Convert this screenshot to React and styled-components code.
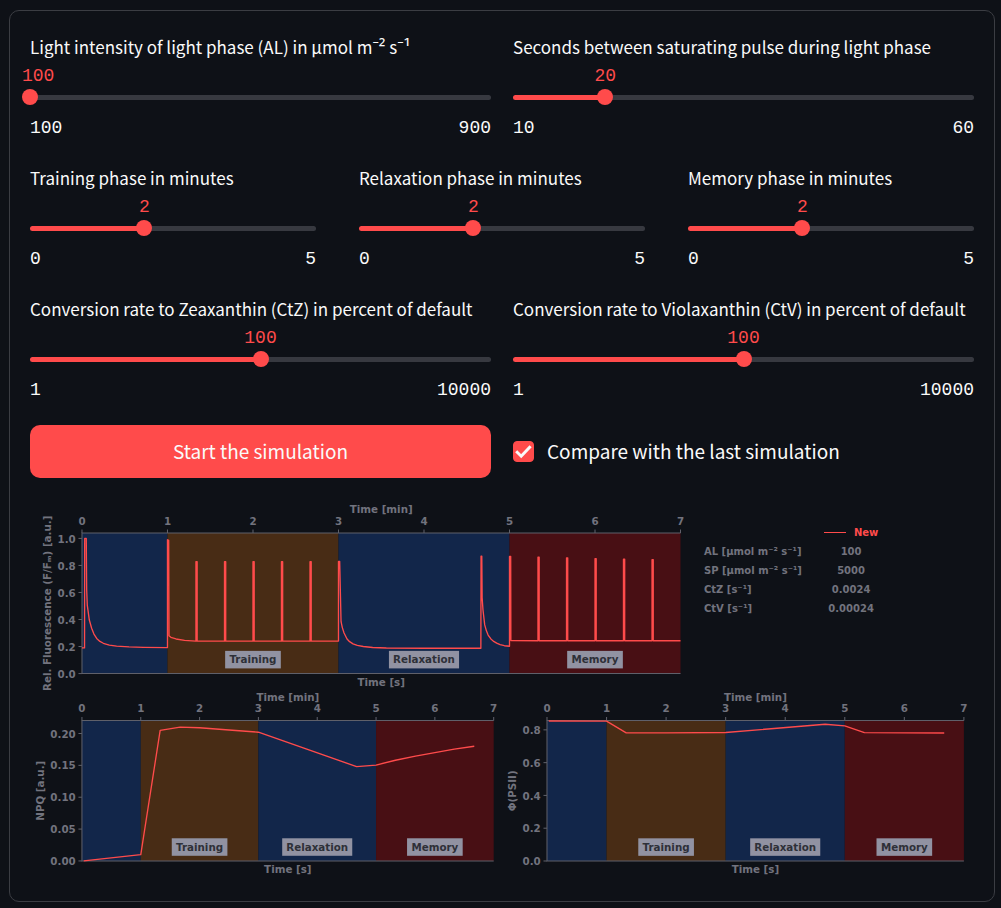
import React, { useState } from "react";
import styled, { createGlobalStyle } from "styled-components";

const color = {
  page: "#0e1117",
  text: "#fafafa",
  accent: "#ff4b4b",
  rail: "#373940",
  border: "#3b3d43",
  chartText: "#72737e",
  spine: "#5f606a",
  tag: "#9192a2",
  tagText: "#2e3038",
  dark: "#12264a",
  training: "#482c15",
  memory: "#480f14",
};

const THUMB = 16;

const GlobalStyle = createGlobalStyle`
  *, *::before, *::after { box-sizing: border-box; }
  body {
    margin: 0;
    background: ${color.page};
    color: ${color.text};
    font-family: "Noto Sans CJK SC", "Noto Sans", sans-serif;
  }
`;

const Card = styled.main`
  margin: 10px 6px 6px 9px;
  padding: 22px 20px 21px;
  border: 1px solid ${color.border};
  border-radius: 10px;
`;

const Controls = styled.form`
  display: flex;
  flex-direction: column;
  gap: 21px;
`;

const Fields = styled.div`
  display: flex;
  flex-direction: column;
  gap: 22px;
`;

const FieldRow = styled.div`
  display: grid;
  grid-template-columns: repeat(${(p) => p.$columns}, minmax(0, 1fr));
  column-gap: ${(p) => (p.$columns === 3 ? 43 : 22)}px;
  align-items: center;
`;

const Field = styled.div`
  display: flex;
  flex-direction: column;
`;

const FieldLabel = styled.label`
  font-size: 17px;
  line-height: 28px;
  white-space: nowrap;
`;

const Exponent = styled.span`
  font-family: "Noto Sans", sans-serif;
  font-size: 19px;
  line-height: 0;
`;

const ValueRow = styled.div`
  display: flex;
  margin: 0 -${THUMB / 2}px;
  font: 18px/30px "Liberation Mono", monospace;
  color: ${color.accent};
`;

const Value = styled.output`
  margin-left: max(
    0px,
    calc((100% - ${THUMB}px) * var(--fill) + ${THUMB / 2}px - var(--chars) * 0.5ch)
  );
`;

const RailArea = styled.div`
  display: flex;
  align-items: center;
  height: 12px;
`;

const Rail = styled.div`
  flex: 1;
  display: flex;
  align-items: center;
  height: 5px;
  border-radius: 3px;
  background: linear-gradient(
    to right,
    ${color.accent} calc(100% * var(--fill)),
    ${color.rail} calc(100% * var(--fill))
  );
`;

const Range = styled.input.attrs({ type: "range" })`
  appearance: none;
  flex: none;
  width: calc(100% + ${THUMB}px);
  height: ${THUMB}px;
  margin: 0 -${THUMB / 2}px;
  background: transparent;
  cursor: pointer;

  &::-webkit-slider-thumb {
    appearance: none;
    width: ${THUMB}px;
    height: ${THUMB}px;
    border: 0;
    border-radius: 50%;
    background: ${color.accent};
  }
`;

const Limits = styled.div`
  display: flex;
  justify-content: space-between;
  margin-top: 11px;
  font: 18px/28px "Liberation Mono", monospace;
`;

const StartButton = styled.button`
  height: 53px;
  padding: 0 16px 2px;
  border: 0;
  border-radius: 10px;
  background: ${color.accent};
  color: ${color.text};
  font-family: inherit;
  font-size: 19px;
  line-height: 28px;
  cursor: pointer;
`;

const CheckLabel = styled.label`
  display: flex;
  align-items: center;
  gap: 13px;
  font-size: 19px;
  line-height: 28px;
  cursor: pointer;
`;

const CheckText = styled.span`
  padding-bottom: 2px;
`;

const CheckBox = styled.span`
  display: grid;
  width: 21px;
  height: 21px;

  & > * {
    grid-area: 1 / 1;
  }
`;

const CheckInput = styled.input.attrs({ type: "checkbox" })`
  appearance: none;
  margin: 0;
  border: 1px solid ${color.rail};
  border-radius: 4px;

  &:checked {
    border-color: ${color.accent};
    background: ${color.accent};
  }

  &:not(:checked) + svg {
    visibility: hidden;
  }
`;

const Tick = styled.svg`
  width: 21px;
  height: 21px;
  pointer-events: none;
`;

const Figure = styled.section`
  margin-top: 12px;
  font-family: "DejaVu Sans", sans-serif;
  font-weight: bold;
  color: ${color.chartText};
`;

const FigureRow = styled.div`
  display: grid;
  grid-template-columns: ${(p) => p.$columns};
`;

const ChartSvg = styled.svg`
  display: block;
  width: 100%;
  height: auto;
  overflow: visible;
  font-size: 10px;
  fill: ${color.chartText};
`;

const Legend = styled.table`
  justify-self: start;
  align-self: start;
  margin: 33px 0 0 14px;
  border-collapse: collapse;
  font-size: 10px;
  line-height: 19px;

  th,
  td {
    height: 19px;
    padding: 0;
    white-space: nowrap;
  }
  th {
    text-align: left;
  }
  td {
    text-align: center;
  }
  tbody th {
    padding-right: 22px;
  }
`;

const SeriesName = styled.span`
  display: flex;
  align-items: center;
  gap: 8px;
  color: ${color.accent};

  &::before {
    content: "";
    width: 22px;
    height: 1px;
    background: ${color.accent};
  }
`;

function SliderField({ id, label, min, max, initial, log }) {
  const low = log ? Math.log10(min) : min;
  const high = log ? Math.log10(max) : max;
  const [position, setPosition] = useState(log ? Math.log10(initial) : initial);
  const shown = String(log ? Math.round(10 ** position) : position);
  const vars = {
    "--fill": (position - low) / (high - low),
    "--chars": shown.length,
  };
  return (
    <Field style={vars}>
      <FieldLabel htmlFor={id}>{label}</FieldLabel>
      <ValueRow>
        <Value htmlFor={id}>{shown}</Value>
      </ValueRow>
      <RailArea>
        <Rail>
          <Range
            id={id}
            min={low}
            max={high}
            step={log ? 0.01 : 1}
            value={position}
            onChange={(e) => setPosition(Number(e.target.value))}
          />
        </Rail>
      </RailArea>
      <Limits>
        <span>{min}</span>
        <span>{max}</span>
      </Limits>
    </Field>
  );
}

const phases = [
  { from: 0, to: 1, fill: color.dark },
  { from: 1, to: 3, fill: color.training, name: "Training", tag: 54 },
  { from: 3, to: 5, fill: color.dark, name: "Relaxation", tag: 68 },
  { from: 5, to: 7, fill: color.memory, name: "Memory", tag: 54 },
];

const minutes = [0, 1, 2, 3, 4, 5, 6, 7];

function Chart({ title, width, height, box, yMax, yTicks, yLabelOffset, points }) {
  const px = (t) => box.x + (t / 7) * box.w;
  const bottom = box.y + box.h;
  const py = (v) => bottom - (v / yMax) * box.h;
  const middle = box.x + box.w / 2;
  const labelX = box.x - yLabelOffset;
  const labelY = box.y + box.h / 2;
  return (
    <ChartSvg viewBox={`0 0 ${width} ${height}`} role="img" aria-label={title}>
      {phases.map((p) => (
        <rect key={p.from} x={px(p.from)} y={box.y} width={px(p.to) - px(p.from)} height={box.h} fill={p.fill} />
      ))}
      <g stroke={color.spine} strokeWidth="1" fill="none">
        <path d={`M${px(7)} ${box.y}H${box.x}V${bottom}H${px(7)}`} />
        {minutes.map((m) => (
          <path key={m} d={`M${px(m)} ${box.y}v-3.4`} />
        ))}
        {yTicks.map((v) => (
          <path key={v} d={`M${box.x} ${py(Number(v))}h-3.4`} />
        ))}
      </g>
      <polyline
        points={points.map(([t, v]) => `${px(t).toFixed(2)},${py(v).toFixed(2)}`).join(" ")}
        fill="none"
        stroke={color.accent}
        strokeWidth="1.3"
        strokeLinejoin="round"
      />
      {phases
        .filter((p) => p.name)
        .map((p) => {
          const cx = (px(p.from) + px(p.to)) / 2;
          return (
            <g key={p.name}>
              <rect x={cx - p.tag / 2} y={bottom - 22} width={p.tag} height="17" fill={color.tag} />
              <text x={cx} y={bottom - 10} textAnchor="middle" fill={color.tagText}>
                {p.name}
              </text>
            </g>
          );
        })}
      {minutes.map((m) => (
        <text key={m} x={px(m)} y={box.y - 8} textAnchor="middle">
          {m}
        </text>
      ))}
      {yTicks.map((v) => (
        <text key={v} x={box.x - 6} y={py(Number(v)) + 4} textAnchor="end">
          {v}
        </text>
      ))}
      <text x={middle} y={box.y - 19} textAnchor="middle">
        Time [min]
      </text>
      <text x={middle} y={bottom + 12} textAnchor="middle">
        Time [s]
      </text>
      <text x={labelX} y={labelY} textAnchor="middle" transform={`rotate(-90 ${labelX} ${labelY})`}>
        {title}
      </text>
    </ChartSvg>
  );
}

const pulse = (t, peak, base) => [
  [t, base],
  [t, peak],
  [t + 0.014, peak],
  [t + 0.014, base],
];

const fluorescence = [
  [0, 0.19], [0.03, 0.19], [0.032, 1], [0.05, 1], [0.055, 0.62], [0.062, 0.507],
  [0.086, 0.396], [0.113, 0.335], [0.14, 0.292], [0.172, 0.26], [0.21, 0.238],
  [0.25, 0.224], [0.32, 0.211], [0.405, 0.203], [0.55, 0.197], [0.72, 0.194], [1, 0.192],
  [1, 0.99], [1.014, 0.985], [1.018, 0.28], [1.04, 0.268], [1.1, 0.256], [1.2, 0.246],
  [1.33, 0.24],
  ...pulse(1.333, 0.828, 0.24),
  ...pulse(1.667, 0.828, 0.24),
  ...pulse(2, 0.828, 0.24),
  ...pulse(2.333, 0.828, 0.24),
  ...pulse(2.667, 0.828, 0.24),
  [3, 0.241], [3, 0.83], [3.014, 0.83], [3.03, 0.384], [3.045, 0.34], [3.065, 0.3],
  [3.1, 0.256], [3.13, 0.236], [3.17, 0.22], [3.22, 0.208], [3.29, 0.2], [3.4, 0.193],
  [3.56, 0.189], [4, 0.187], [4.665, 0.187], [4.667, 0.868], [4.676, 0.868], [4.68, 0.56],
  [4.69, 0.47], [4.71, 0.36], [4.73, 0.316], [4.75, 0.285], [4.78, 0.258], [4.81, 0.24],
  [4.85, 0.225], [4.89, 0.214], [4.94, 0.206], [5, 0.202],
  [5, 0.866], [5.014, 0.866], [5.016, 0.244],
  ...pulse(5.333, 0.861, 0.243),
  ...pulse(5.667, 0.856, 0.243),
  ...pulse(6, 0.85, 0.243),
  ...pulse(6.333, 0.846, 0.243),
  ...pulse(6.667, 0.842, 0.243),
  [7, 0.243],
];

const npq = [
  [0.03, 0], [1, 0.01], [1.33, 0.205], [1.67, 0.21], [2, 0.209], [2.5, 0.2055], [3, 0.202],
  [4.67, 0.148], [5, 0.1505], [5.33, 0.158], [5.67, 0.1645], [6, 0.17], [6.33, 0.1755], [6.67, 0.18],
];

const phi = [
  [0.03, 0.854], [1, 0.853], [1.33, 0.782], [2, 0.782], [3, 0.784], [4.67, 0.834],
  [5, 0.824], [5.33, 0.783], [6.67, 0.781],
];

const parameters = [
  ["AL [µmol m⁻² s⁻¹]", "100"],
  ["SP [µmol m⁻² s⁻¹]", "5000"],
  ["CtZ [s⁻¹]", "0.0024"],
  ["CtV [s⁻¹]", "0.00024"],
];

const intensityLabel = (
  <>
    Light intensity of light phase (AL) in µmol m<Exponent>⁻²</Exponent> s<Exponent>⁻¹</Exponent>
  </>
);

export default function App() {
  const [compare, setCompare] = useState(true);
  return (
    <>
      <GlobalStyle />
      <Card>
        <Controls onSubmit={(e) => e.preventDefault()}>
          <Fields>
            <FieldRow $columns={2}>
              <SliderField id="al" label={intensityLabel} min={100} max={900} initial={100} />
              <SliderField id="sp" label="Seconds between saturating pulse during light phase" min={10} max={60} initial={20} />
            </FieldRow>
            <FieldRow $columns={3}>
              <SliderField id="training" label="Training phase in minutes" min={0} max={5} initial={2} />
              <SliderField id="relaxation" label="Relaxation phase in minutes" min={0} max={5} initial={2} />
              <SliderField id="memory" label="Memory phase in minutes" min={0} max={5} initial={2} />
            </FieldRow>
            <FieldRow $columns={2}>
              <SliderField id="ctz" label="Conversion rate to Zeaxanthin (CtZ) in percent of default" min={1} max={10000} initial={100} log />
              <SliderField id="ctv" label="Conversion rate to Violaxanthin (CtV) in percent of default" min={1} max={10000} initial={100} log />
            </FieldRow>
          </Fields>
          <FieldRow $columns={2}>
            <StartButton type="submit">Start the simulation</StartButton>
            <CheckLabel>
              <CheckBox>
                <CheckInput checked={compare} onChange={(e) => setCompare(e.target.checked)} />
                <Tick viewBox="0 0 21 21" aria-hidden="true">
                  <path d="M3.2 10.3 8.2 15.2 17.6 5.2" fill="none" stroke={color.text} strokeWidth="3" />
                </Tick>
              </CheckBox>
              <CheckText>Compare with the last simulation</CheckText>
            </CheckLabel>
          </FieldRow>
        </Controls>
        <Figure>
          <FigureRow $columns="660fr 284fr">
            <Chart
              title="Rel. Fluorescence (F/Fₘ) [a.u.]"
              width={640}
              height={194}
              box={{ x: 50.4, y: 41.7, w: 580.4, h: 136.3 }}
              yMax={1.04}
              yTicks={["0.0", "0.2", "0.4", "0.6", "0.8", "1.0"]}
              yLabelOffset={30}
              points={fluorescence}
            />
            <Legend>
              <thead>
                <tr>
                  <td />
                  <th scope="col">
                    <SeriesName>New</SeriesName>
                  </th>
                </tr>
              </thead>
              <tbody>
                {parameters.map(([name, value]) => (
                  <tr key={name}>
                    <th scope="row">{name}</th>
                    <td>{value}</td>
                  </tr>
                ))}
              </tbody>
            </Legend>
          </FigureRow>
          <FigureRow $columns="474fr 470fr">
            <Chart
              title="NPQ [a.u.]"
              width={460}
              height={184}
              box={{ x: 50.4, y: 29.6, w: 399.6, h: 136.3 }}
              yMax={0.2204}
              yTicks={["0.00", "0.05", "0.10", "0.15", "0.20"]}
              yLabelOffset={37}
              points={npq}
            />
            <Chart
              title="Φ(PSII)"
              width={456}
              height={184}
              box={{ x: 41.7, y: 29.6, w: 404.5, h: 136.3 }}
              yMax={0.857}
              yTicks={["0.0", "0.2", "0.4", "0.6", "0.8"]}
              yLabelOffset={30}
              points={phi}
            />
          </FigureRow>
        </Figure>
      </Card>
    </>
  );
}
